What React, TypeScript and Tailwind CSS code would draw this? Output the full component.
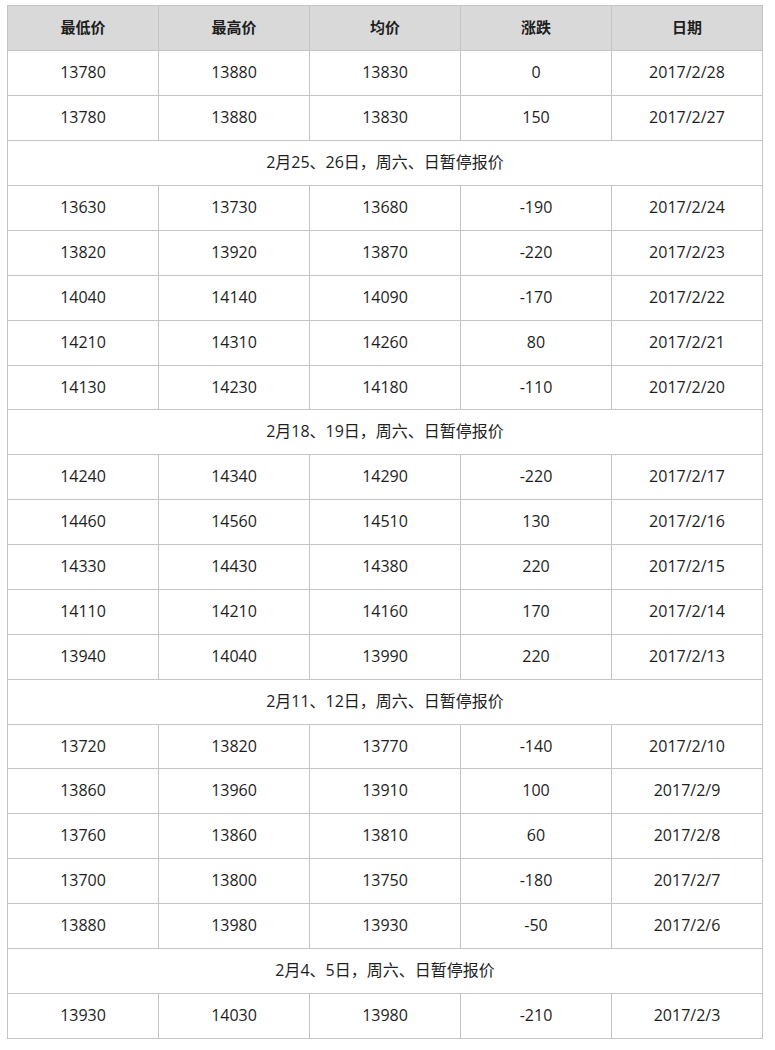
const rows: (string[] | string)[] = [
  ["13780", "13880", "13830", "0", "2017/2/28"],
  ["13780", "13880", "13830", "150", "2017/2/27"],
  "2月25、26日，周六、日暂停报价",
  ["13630", "13730", "13680", "-190", "2017/2/24"],
  ["13820", "13920", "13870", "-220", "2017/2/23"],
  ["14040", "14140", "14090", "-170", "2017/2/22"],
  ["14210", "14310", "14260", "80", "2017/2/21"],
  ["14130", "14230", "14180", "-110", "2017/2/20"],
  "2月18、19日，周六、日暂停报价",
  ["14240", "14340", "14290", "-220", "2017/2/17"],
  ["14460", "14560", "14510", "130", "2017/2/16"],
  ["14330", "14430", "14380", "220", "2017/2/15"],
  ["14110", "14210", "14160", "170", "2017/2/14"],
  ["13940", "14040", "13990", "220", "2017/2/13"],
  "2月11、12日，周六、日暂停报价",
  ["13720", "13820", "13770", "-140", "2017/2/10"],
  ["13860", "13960", "13910", "100", "2017/2/9"],
  ["13760", "13860", "13810", "60", "2017/2/8"],
  ["13700", "13800", "13750", "-180", "2017/2/7"],
  ["13880", "13980", "13930", "-50", "2017/2/6"],
  "2月4、5日，周六、日暂停报价",
  ["13930", "14030", "13980", "-210", "2017/2/3"],
];

const heads = ["最低价", "最高价", "均价", "涨跌", "日期"];

// rows that render one pixel shorter in the original
const shortRows = [7, 15];

export default function App() {
  return (
    <div
      className="bg-white pt-[5px] pl-[7px] text-[16px] text-[#1e1e1e]"
      style={{ fontFamily: '"Open Sans", "Noto Sans CJK SC", sans-serif' }}
    >
      <table className="border-collapse table-fixed w-[756px]">
        <thead>
          <tr className="bg-[#d9d9d9] h-[45px]">
            {heads.map((h) => (
              <th
                key={h}
                className="border border-[#c4c4c4] font-bold text-[15px] text-center p-0 pb-[2px] w-[151px]"
              >
                {h}
              </th>
            ))}
          </tr>
        </thead>
        <tbody>
          {rows.map((r, i) => {
            const h = shortRows.includes(i) ? "h-[44px]" : "h-[45px]";
            return typeof r === "string" ? (
              <tr key={i} className={h}>
                <td colSpan={5} className="border border-[#c4c4c4] text-center p-0 pb-[2px]">
                  {r}
                </td>
              </tr>
            ) : (
              <tr key={i} className={h}>
                {r.map((c, j) => (
                  <td key={j} className="border border-[#c4c4c4] text-center p-0 pb-[2px]">
                    {c}
                  </td>
                ))}
              </tr>
            );
          })}
        </tbody>
      </table>
    </div>
  );
}
